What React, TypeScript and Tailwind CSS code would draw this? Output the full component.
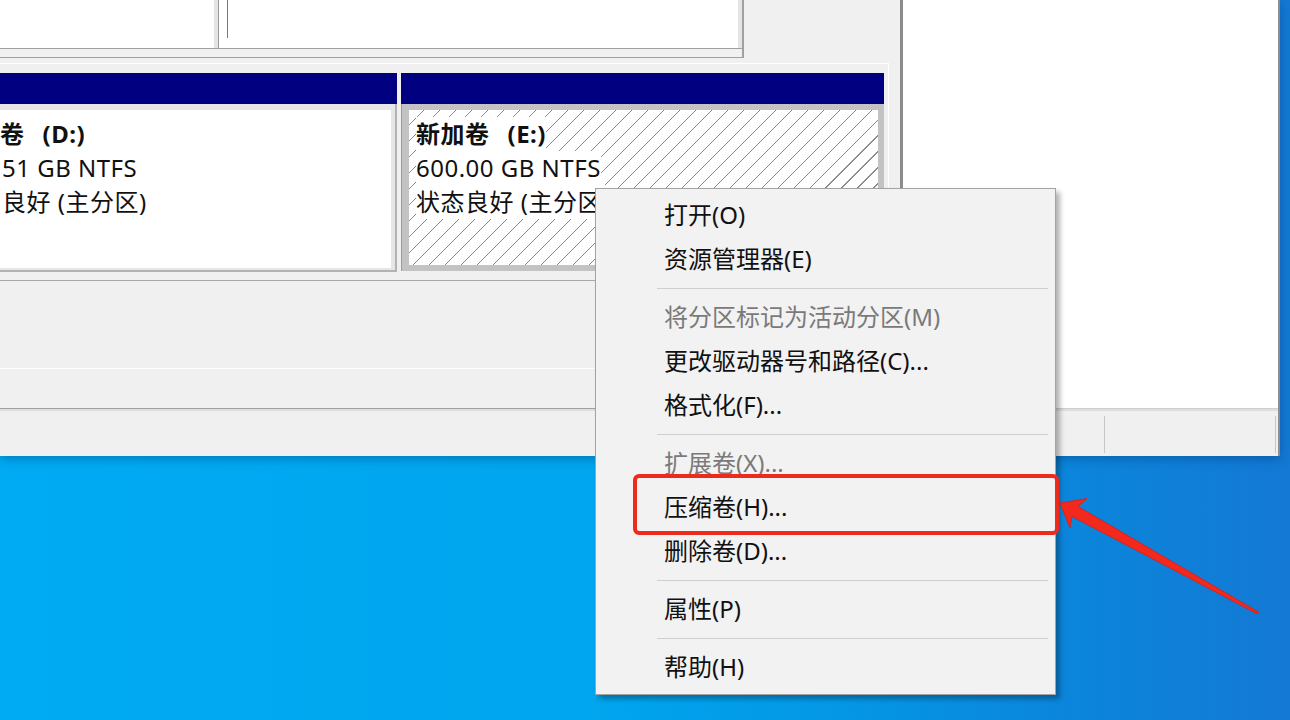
import React from "react"

type MenuEntry = { label: string; disabled?: boolean } | "sep"

const menu: MenuEntry[] = [
  { label: "打开(O)" },
  { label: "资源管理器(E)" },
  "sep",
  { label: "将分区标记为活动分区(M)", disabled: true },
  { label: "更改驱动器号和路径(C)..." },
  { label: "格式化(F)..." },
  "sep",
  { label: "扩展卷(X)...", disabled: true },
  { label: "压缩卷(H)..." },
  { label: "删除卷(D)..." },
  "sep",
  { label: "属性(P)" },
  "sep",
  { label: "帮助(H)" },
]

function ContextMenu() {
  return (
    <div className="absolute left-[595px] top-[188px] w-[461px] bg-[#f2f2f2] border border-[#a3a3a3] shadow-[4px_4px_5px_rgba(0,0,0,0.3)] pt-[4px] pb-[5px]">
      {menu.map((item, i) =>
        item === "sep" ? (
          <div key={i} className="h-[14px] flex items-center pl-[61px] pr-[7px]">
            <div className="h-px w-full bg-[#cfcfcf]" />
          </div>
        ) : (
          <div
            key={i}
            className={
              item.disabled
                ? "h-[44px] pl-[68px] text-[24px] leading-[44px] text-[#7a7a7a] whitespace-nowrap"
                : "h-[44px] pl-[68px] text-[24px] leading-[44px] text-[#111] whitespace-nowrap"
            }
          >
            {item.label}
          </div>
        )
      )}
    </div>
  )
}

export default function App() {
  return (
    <div className="relative w-[1290px] h-[720px] overflow-hidden bg-[linear-gradient(90deg,#00abf3_0%,#00a6ef_45%,#0497e6_65%,#0b86dc_82%,#1379d4_100%)] font-['Noto_Sans','Noto_Sans_CJK_SC',sans-serif]">
      {/* disk management window, cropped at the left */}
      <div className="w-[1280px] h-[456px] flex flex-col bg-[#f0f0f0] border-r-2 border-[#8e8e8e] shadow-[0_3px_10px_rgba(0,40,90,0.35)]">
        <div className="flex h-[409px]">
          {/* left pane */}
          <div className="w-[900px] flex flex-col border-b border-[#a0a0a0]">
            {/* volume list */}
            <div className="flex h-[58px] shrink-0">
              <div className="w-[744px] flex flex-col border-r-2 border-b border-[#a0a0a0]">
                <div className="flex h-[49px] border-b border-[#a0a0a0]">
                  <div className="w-[218px] bg-white border-r-4 border-[#e4e4e4]" />
                  <div className="w-px bg-[#9a9a9a]" />
                  <div className="flex-1 bg-white border-r-4 border-[#e4e4e4] pl-[8px]">
                    <div className="w-px h-[38px] bg-[#7a7a7a]" />
                  </div>
                </div>
              </div>
              <div className="flex-1" />
            </div>

            {/* graphical disk view */}
            <div className="flex-1 pt-[5px] pr-[11px]">
              <div className="h-full flex flex-col border-t border-r border-white">
                <div className="flex pt-[9px]">
                  {/* D: (left part out of view) */}
                  <div className="w-[397px] shrink-0 flex flex-col">
                    <div className="h-[31px] bg-[#000080]" />
                    <div className="h-[168px] border-r-2 border-b-2 border-[#b2b2b2]">
                      <div className="h-full bg-white border-t-[6px] border-r-[4px] border-b-[2px] border-[#e6e6e6] pt-[7px]">
                        <div className="flex flex-col items-start text-[24px] leading-[34px] tracking-[0.5px] text-[#111] whitespace-nowrap">
                          <span className="font-bold">
                            卷<span className="ml-[18px]">(D:)</span>
                          </span>
                          <span className="pl-[2px]">51 GB NTFS</span>
                          <span className="pl-[2px]">良好 (主分区)</span>
                        </div>
                      </div>
                    </div>
                  </div>
                  <div className="w-[4px] shrink-0" />
                  {/* E: selected, hatched */}
                  <div className="w-[483px] shrink-0 flex flex-col">
                    <div className="h-[31px] bg-[#000080]" />
                    <div className="h-[167px] bg-[#c3c3c3] border-l border-[#9c9c9c] pt-[6px] pl-[7px] pr-[6px] pb-[6px]">
                      <div className="h-full bg-white bg-[repeating-linear-gradient(135deg,transparent_0px,transparent_10.3px,#8a8a8a_10.3px,#8a8a8a_11.3px)] pt-[7px] pl-[7px]">
                        <div className="flex flex-col items-start text-[24px] leading-[34px] tracking-[0.5px] text-[#111] whitespace-nowrap">
                          <span className="bg-white font-bold">
                            新加卷<span className="ml-[18px]">(E:)</span>
                          </span>
                          <span className="bg-white">600.00 GB NTFS</span>
                          <span className="bg-white">状态良好 (主分区)</span>
                        </div>
                      </div>
                    </div>
                  </div>
                </div>
                <div className="h-[8px]" />
                <div className="h-px bg-[#a8a8a8]" />
                <div className="h-[87px]" />
                <div className="h-px bg-white" />
              </div>
            </div>
          </div>

          <div className="w-[3px] bg-[#8c8c8c]" />
          {/* right pane */}
          <div className="flex-1 bg-white border-b border-[#cfcfcf]" />
        </div>

        {/* status bar */}
        <div className="flex-1 flex pt-[5px] pb-[3px] border-t-2 border-[#dedede]">
          <div className="flex-1" />
          <div className="w-px bg-[#c6c6c6]" />
          <div className="w-[170px]" />
          <div className="w-px bg-[#c6c6c6]" />
          <div className="w-[2px]" />
        </div>
      </div>

      <ContextMenu />

      {/* red annotation */}
      <div className="absolute left-[633px] top-[474px] w-[426px] h-[61px] border-[4px] border-[#ee2a1c] rounded-[6px]" />
      <svg className="absolute left-0 top-0 pointer-events-none" width="1290" height="720" viewBox="0 0 1290 720">
        <polygon
          points="1060,503 1087,498.5 1078,506.5 1258.5,612 1257.5,614 1072,516.5 1070,528"
          fill="#f2291c"
          stroke="#d81e14"
          strokeWidth="0.8"
          strokeLinejoin="round"
        />
      </svg>
    </div>
  )
}
